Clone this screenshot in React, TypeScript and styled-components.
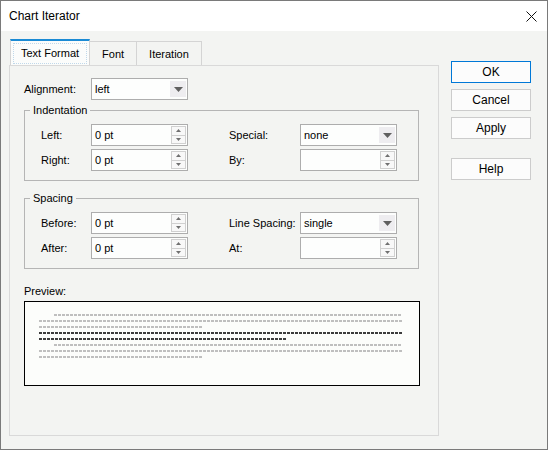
import React from 'react';
import styled, { createGlobalStyle } from 'styled-components';

const GlobalStyle = createGlobalStyle`
  html, body {
    margin: 0;
    padding: 0;
    background: #f3f4f2;
  }
  * {
    box-sizing: border-box;
  }
`;

const Window = styled.div`
  width: 548px;
  height: 450px;
  border: 1px solid #7a7a7a;
  background: #f3f4f2;
  font-family: 'Liberation Sans', Arial, sans-serif;
  font-size: 11px;
  color: #000;
  display: flex;
  flex-direction: column;
`;

const TitleBar = styled.div`
  height: 30px;
  background: #ffffff;
  display: flex;
  align-items: center;
  justify-content: space-between;
  padding: 0 10px 0 8px;
  flex-shrink: 0;
`;

const Title = styled.div`
  font-size: 12px;
`;

const CloseButton = styled.div`
  width: 12px;
  height: 12px;
  display: flex;
  align-items: center;
  justify-content: center;
`;

const Body = styled.div`
  display: flex;
  padding: 8px 0 0 8px;
`;

const LeftColumn = styled.div`
  width: 430px;
  display: flex;
  flex-direction: column;
`;

const TabStrip = styled.div`
  display: flex;
  align-items: flex-end;
  height: 26px;
  padding-left: 1px;
`;

const Tab = styled.div<{ active?: boolean }>`
  height: ${p => (p.active ? 26 : 24)}px;
  padding: ${p => (p.active ? '0 2px' : '0 12px')};
  display: flex;
  align-items: center;
  background: ${p => (p.active ? '#fbfcfb' : '#f3f4f2')};
  border: 1px solid #d4d4d4;
  border-bottom: none;
  border-top: ${p => (p.active ? '2px solid #1a8ad4' : '1px solid #d4d4d4')};
  margin-left: ${p => (p.active ? 0 : -1)}px;
`;

const TabFocus = styled.div`
  height: 21px;
  display: flex;
  align-items: center;
  padding: 0 7px 0 7px;
  border: 1px dotted #c0d8ea;
`;

const Panel = styled.div`
  height: 371px;
  border: 1px solid #d9d9d9;
  padding: 12px 14px;
`;

const Row = styled.div`
  display: flex;
  align-items: center;
  height: 22px;
`;

const RowLabel = styled.div<{ width: number }>`
  width: ${p => p.width}px;
`;

const Box = styled.div<{ width?: number }>`
  width: ${p => p.width ?? 97}px;
  height: 22px;
  border: 1px solid #adadad;
  background: #fdfefd;
  display: flex;
  align-items: center;
  padding: 0 1px 0 3px;
`;

const BoxText = styled.div`
  flex: 1;
`;

const DropButton = styled.div`
  width: 16px;
  height: 16px;
  background: #eeedf0;
  display: flex;
  align-items: center;
  justify-content: center;
`;

const SpinWrap = styled.div`
  width: 15px;
  height: 18px;
  display: flex;
  flex-direction: column;
`;

const SpinButton = styled.div`
  flex: 1;
  border: 1px solid #d0d0d0;
  background: #f8f8f8;
  display: flex;
  align-items: center;
  justify-content: center;
  & + & {
    border-top: none;
  }
`;

const Group = styled.fieldset<{ top: number }>`
  margin: ${p => p.top}px 0 0 0;
  width: 395px;
  border: 1px solid #b5b5b5;
  padding: 7px 20px 9px 16px;
  min-width: 0;
`;

const Legend = styled.legend`
  padding: 0 3px;
  margin-left: -11px;
  line-height: 14px;
`;

const FieldGrid = styled.div`
  display: grid;
  grid-template-columns: 50px 97px 41px 71px 97px;
  grid-auto-rows: 22px;
  row-gap: 3px;
  align-items: center;
`;

const PreviewLabel = styled.div`
  margin-top: 15px;
  line-height: 14px;
`;

const PreviewBox = styled.div`
  margin-top: 3px;
  width: 396px;
  height: 85px;
  border: 1px solid #000;
  background: #fcfdfb;
  padding: 12px 14px;
  display: flex;
  flex-direction: column;
  gap: 4px;
`;

const DashLine = styled.div<{ dark?: boolean; indent?: number; width: number }>`
  height: 2px;
  margin-left: ${p => p.indent ?? 0}px;
  width: ${p => p.width}px;
  background: repeating-linear-gradient(
    90deg,
    ${p => (p.dark ? '#3c3c3c' : '#bfbfbf')} 0 3px,
    transparent 3px 4px
  );
`;

const RightColumn = styled.div`
  margin-left: 12px;
  padding-top: 22px;
  display: flex;
  flex-direction: column;
  gap: 6px;
`;

const Button = styled.div<{ primary?: boolean; gapBefore?: number }>`
  width: 80px;
  height: 22px;
  border: 1px solid ${p => (p.primary ? '#0078d7' : '#cccccc')};
  background: #fcfcfc;
  display: flex;
  align-items: center;
  justify-content: center;
  font-size: 12px;
  margin-top: ${p => p.gapBefore ?? 0}px;
`;

const Arrow = ({ down = true, w = 9, h = 5, color = '#606060' }: { down?: boolean; w?: number; h?: number; color?: string }) => (
  <svg width={w} height={h} viewBox={`0 0 ${w} ${h}`}>
    <polygon points={down ? `0,0 ${w},0 ${w / 2},${h}` : `0,${h} ${w},${h} ${w / 2},0`} fill={color} />
  </svg>
);

const Combo = ({ value, width }: { value: string; width?: number }) => (
  <Box width={width}>
    <BoxText>{value}</BoxText>
    <DropButton>
      <Arrow />
    </DropButton>
  </Box>
);

const Spinner = ({ value }: { value: string }) => (
  <Box>
    <BoxText>{value}</BoxText>
    <SpinWrap>
      <SpinButton>
        <Arrow down={false} w={5} h={3} color="#707070" />
      </SpinButton>
      <SpinButton>
        <Arrow w={5} h={3} color="#707070" />
      </SpinButton>
    </SpinWrap>
  </Box>
);

// preview paragraphs: previous (light), current (dark), next (light)
const previewLines = [
  { indent: 15, width: 348 },
  { width: 363 },
  { width: 163 },
  { width: 363, dark: true },
  { width: 248, dark: true },
  { indent: 15, width: 348 },
  { width: 363 },
  { width: 163 },
];

export default function App() {
  return (
    <>
      <GlobalStyle />
      <Window>
        <TitleBar>
          <Title>Chart Iterator</Title>
          <CloseButton>
            <svg width="11" height="11" viewBox="0 0 11 11">
              <path d="M0.5 0.5 L10.5 10.5 M10.5 0.5 L0.5 10.5" stroke="#111" strokeWidth="1" />
            </svg>
          </CloseButton>
        </TitleBar>
        <Body>
          <LeftColumn>
            <TabStrip>
              <Tab active>
                <TabFocus>Text Format</TabFocus>
              </Tab>
              <Tab>Font</Tab>
              <Tab>Iteration</Tab>
            </TabStrip>
            <Panel>
              <Row>
                <RowLabel width={67}>Alignment:</RowLabel>
                <Combo value="left" />
              </Row>

              <Group top={3}>
                <Legend>Indentation</Legend>
                <FieldGrid>
                  <div>Left:</div>
                  <Spinner value="0 pt" />
                  <div />
                  <div>Special:</div>
                  <Combo value="none" />
                  <div>Right:</div>
                  <Spinner value="0 pt" />
                  <div />
                  <div>By:</div>
                  <Spinner value="" />
                </FieldGrid>
              </Group>

              <Group top={10}>
                <Legend>Spacing</Legend>
                <FieldGrid>
                  <div>Before:</div>
                  <Spinner value="0 pt" />
                  <div />
                  <div>Line Spacing:</div>
                  <Combo value="single" />
                  <div>After:</div>
                  <Spinner value="0 pt" />
                  <div />
                  <div>At:</div>
                  <Spinner value="" />
                </FieldGrid>
              </Group>

              <PreviewLabel>Preview:</PreviewLabel>
              <PreviewBox>
                {previewLines.map((l, i) => (
                  <DashLine key={i} indent={l.indent} width={l.width} dark={l.dark} />
                ))}
              </PreviewBox>
            </Panel>
          </LeftColumn>
          <RightColumn>
            <Button primary>OK</Button>
            <Button>Cancel</Button>
            <Button>Apply</Button>
            <Button gapBefore={13}>Help</Button>
          </RightColumn>
        </Body>
      </Window>
    </>
  );
}
